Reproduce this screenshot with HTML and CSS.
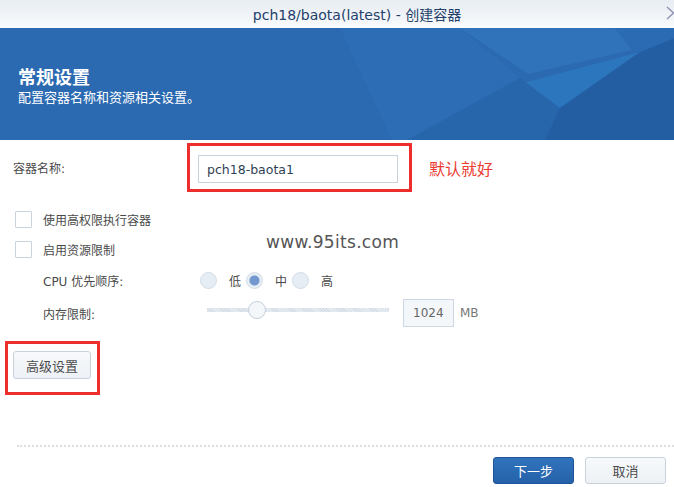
FILE: index.html
```html
<!DOCTYPE html>
<html lang="zh-CN">
  <head>
    <meta charset="UTF-8" />
    <meta name="viewport" content="width=device-width, initial-scale=1.0" />
    <title>创建容器</title>
    <link rel="stylesheet" href="styles.css">
  </head>
  <body>
    <div class="window">
      <div class="titlebar">
        <span class="title">pch18/baota(latest) - 创建容器</span>
        <svg class="close" width="8" height="14" viewBox="0 0 8 14">
          <polyline points="1,1 7.5,7 1,13" fill="none" stroke="#8d8fb2" stroke-width="1.3" />
        </svg>
      </div>

      <div class="banner">
        <svg class="banner-art" viewBox="0 0 674 112" preserveAspectRatio="none">
          <polygon points="340,0 460,0 520,50 407,112 392,112" fill="#2d6db5" />
          <polygon points="460,0 615,0 632,22 528,46" fill="#3073ba" />
          <polygon points="497,62 640,24 560,80" fill="#2c76be" />
          <polygon points="407,112 520,50 560,80 545,112" fill="#2866ac" />
          <polygon points="640,24 674,10 674,112 545,112 560,80" fill="#245ea2" />
          <polygon points="615,0 674,0 674,10 640,24 632,22" fill="#2a6bb3" />
        </svg>
        <h1>常规设置</h1>
        <p>配置容器名称和资源相关设置。</p>
      </div>

      <div class="content">
        <div class="name-row">
          <label class="field-label" for="name">容器名称:</label>
          <div class="mark mark-input">
            <input type="text" id="name" class="text-input" value="pch18-baota1" />
          </div>
          <span class="note">默认就好</span>
        </div>

        <label class="check-row">
          <input type="checkbox" class="check" />
          <span>使用高权限执行容器</span>
        </label>
        <label class="check-row">
          <input type="checkbox" class="check" />
          <span>启用资源限制</span>
        </label>

        <div class="sub-row">
          <span class="sub-label">CPU 优先顺序:</span>
          <div class="radios">
            <input type="radio" name="cpu" class="radio" />
            <span class="radio-text">低</span>
            <input type="radio" name="cpu" class="radio" checked />
            <span class="radio-text">中</span>
            <input type="radio" name="cpu" class="radio" />
            <span class="radio-text">高</span>
          </div>
        </div>

        <div class="sub-row">
          <span class="sub-label">内存限制:</span>
          <input type="range" class="slider" min="0" max="100" value="25" />
          <input type="text" class="num-input" value="1024" />
          <span class="unit">MB</span>
        </div>

        <div class="mark mark-btn">
          <button class="btn">高级设置</button>
        </div>

        <div class="watermark">www.95its.com</div>
      </div>

      <div class="footer">
        <button class="btn btn-primary">下一步</button>
        <button class="btn">取消</button>
      </div>
    </div>
  </body>
</html>
```

FILE: styles.css
```css
body {
  margin: 0;
  background: white;
  font-family: "DejaVu Sans", "Noto Sans CJK SC", sans-serif;
  font-size: 12px;
  color: #4a4a4a;
}

.window {
  width: 674px;
  height: 487px;
  display: flex;
  flex-direction: column;
  overflow: hidden;
}

.titlebar {
  height: 28px;
  flex-shrink: 0;
  display: flex;
  align-items: center;
  background: linear-gradient(#e8edf3, #f3f6f9 70%, #fafbfc);
}
.title {
  flex: 1;
  text-align: center;
  padding-left: 48px;
  font-size: 14px;
  color: #23406a;
}
.close {
  flex-shrink: 0;
  margin-bottom: 2px;
}

.banner {
  height: 112px;
  flex-shrink: 0;
  position: relative;
  background-color: #2b6ab1;
  padding: 37px 18px 0;
  box-sizing: border-box;
  color: white;
}
.banner-art {
  position: absolute;
  top: 0;
  left: 0;
  width: 100%;
  height: 100%;
}
.banner h1,
.banner p {
  position: relative;
  margin: 0;
  font-family: "Noto Sans CJK SC", sans-serif;
}
.banner h1 {
  font-size: 18px;
  line-height: 22px;
  font-weight: bold;
}
.banner p {
  margin-top: 2px;
  font-size: 13px;
  line-height: 16px;
}

.content {
  flex: 1;
  position: relative;
  padding: 3px 0 0 13px;
}

.mark {
  border: 3px solid #ee2d2d;
}

.name-row {
  display: flex;
  align-items: center;
}
.field-label {
  width: 174px;
}
.mark-input {
  padding: 9px 11px 6px 8px;
}
.text-input {
  width: 200px;
  height: 28px;
  box-sizing: border-box;
  border: 1px solid #c9d3de;
  padding: 0 8px;
  font-family: inherit;
  font-size: 12.5px;
  color: #2e3f55;
  outline: none;
}
.note {
  margin-left: 17px;
  font-family: "Noto Sans CJK SC", sans-serif;
  font-size: 16px;
  color: #ec3a32;
}

.check-row {
  display: flex;
  align-items: center;
  height: 17px;
  margin-top: 13px;
}
.check-row:first-of-type {
  margin-top: 19px;
}
.check {
  appearance: none;
  width: 17px;
  height: 17px;
  margin: 0 11px 0 2px;
  border: 1px solid #c9d4df;
  border-radius: 1px;
  background: white;
  box-sizing: border-box;
}

.sub-row {
  display: flex;
  align-items: center;
  padding-left: 30px;
  margin-top: 14px;
}
.sub-row + .sub-row {
  margin-top: 10px;
}
.sub-label {
  width: 157px;
}
.radios {
  display: flex;
  align-items: center;
}
.radio {
  appearance: none;
  width: 17px;
  height: 17px;
  margin: 0;
  border-radius: 50%;
  border: 1px solid #d3dde7;
  background: #e6edf4;
  box-sizing: border-box;
}
.radio:checked {
  background: radial-gradient(circle, #7398cd 0 4.5px, #e6edf4 5.5px);
}
.radio-text {
  margin: 0 5px 0 12px;
}

.slider {
  appearance: none;
  width: 182px;
  height: 4px;
  margin: 0 0 7px 7px;
  background: repeating-linear-gradient(45deg, #d4dde6 0 1px, #e8eef3 1px 2px);
}
.slider::-webkit-slider-thumb {
  appearance: none;
  width: 18px;
  height: 18px;
  border-radius: 50%;
  border: 1px solid #c3cfdb;
  background: #f4f7fa;
}
.num-input {
  width: 51px;
  height: 28px;
  box-sizing: border-box;
  margin-left: 14px;
  border: 1px solid #cfd8e2;
  background: #f4f7fa;
  padding: 0 0 0 9px;
  font-family: inherit;
  font-size: 12px;
  color: #666;
  outline: none;
}
.unit {
  margin-left: 6px;
  color: #777;
}

.mark-btn {
  align-self: flex-start;
  width: fit-content;
  margin: 14px 0 0 -8px;
  padding: 7px 6px 13px 5px;
}

.btn {
  width: 78px;
  height: 28px;
  border: 1px solid #c8d2dd;
  border-radius: 3px;
  background: linear-gradient(#f7f9fb, #edf1f5);
  font-family: "Noto Sans CJK SC", sans-serif;
  font-size: 13px;
  color: #4c4c4c;
}

.watermark {
  position: absolute;
  left: 266px;
  top: 92px;
  font-size: 17px;
  color: #555;
  letter-spacing: 0.3px;
}

.footer {
  height: 42px;
  flex-shrink: 0;
  margin-left: 17px;
  border-top: 2px dotted #dedede;
  box-sizing: border-box;
  display: flex;
  justify-content: flex-end;
  gap: 11px;
  padding: 10px 8px 0 0;
}
.footer .btn {
  width: 81px;
  height: 27px;
}
.btn-primary {
  border-color: #1d5496;
  background: linear-gradient(#3174bd, #2461a8);
  color: white;
}
```
